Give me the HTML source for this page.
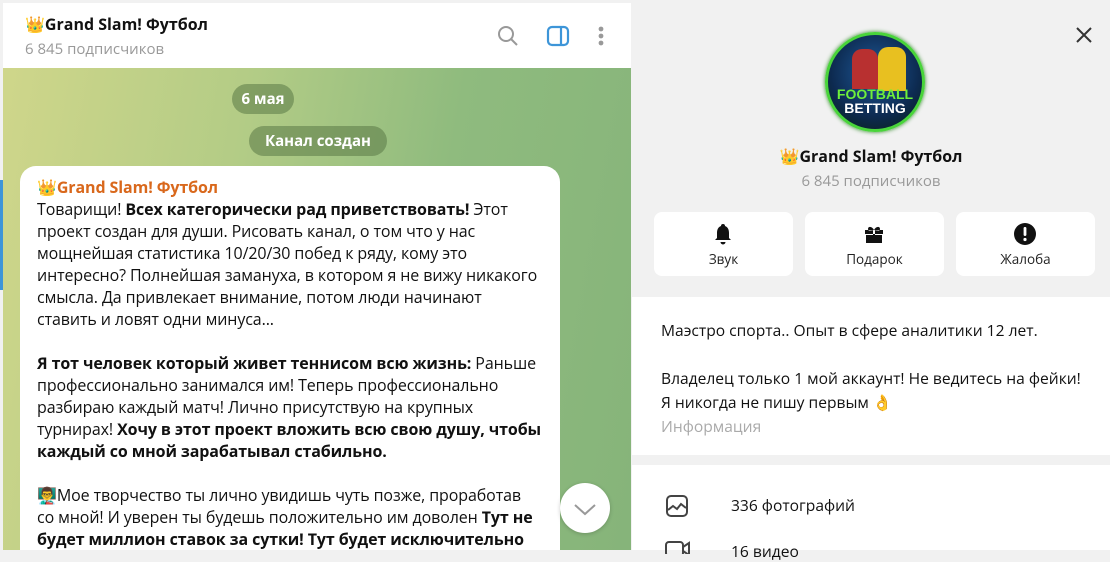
<!DOCTYPE html>
<html><head><meta charset="utf-8"><style>
*{margin:0;padding:0;box-sizing:border-box}
body{width:1110px;height:550px;overflow:hidden;background:#f1f1f1;font-family:"Open Sans","Liberation Sans","DejaVu Sans",sans-serif;position:relative}
.left{position:absolute;left:3px;top:3px;width:628px;height:547px;background:#fff}
.hdr{position:absolute;left:0;top:0;width:628px;height:65px;background:#fff}
.chat{position:absolute;left:0;top:65px;width:628px;height:482px;background:linear-gradient(100deg,#cfd68a 0%,#b3cc86 35%,#8fbb7e 65%,#86b47a 100%);overflow:hidden}
.pill{position:absolute;background:rgba(90,120,70,.55);color:#fff;font-size:15px;font-weight:bold;border-radius:15px;height:30px;line-height:30px;text-align:center;white-space:nowrap}
.bubble{position:absolute;left:17px;top:98px;width:540px;height:420px;background:#fff;border-radius:16px}
.txt{position:absolute;left:37px;top:176px;font-size:16px;line-height:22px;color:#111;white-space:nowrap;letter-spacing:-0.1px}
.name{color:#d9681c}
.right{position:absolute;left:632px;top:0;width:478px;height:550px;background:#f1f1f1}
.btn{position:absolute;top:212px;width:139px;height:64px;background:#fff;border-radius:8px;text-align:center;font-size:13.5px;color:#222}
.btn span{position:absolute;left:0;right:0;top:38px}
.btn svg{position:absolute;left:57px;top:10px}
</style></head><body>
<div style="position:absolute;left:0;top:180px;width:3px;height:110px;background:#3d95d8"></div>
<div class="left">
 <div class="hdr">
  <div style="position:absolute;left:22px;top:10px;font-size:16px;font-weight:bold;color:#111">👑Grand Slam! Футбол</div>
  <div style="position:absolute;left:22px;top:36px;font-size:15px;color:#999">6 845 подписчиков</div>
  <svg style="position:absolute;left:494px;top:22px" width="22" height="22" viewBox="0 0 22 22"><circle cx="9" cy="9" r="7" fill="none" stroke="#999" stroke-width="2"/><path d="M14 14l6 6" stroke="#999" stroke-width="2"/></svg>
  <svg style="position:absolute;left:543px;top:22px" width="24" height="22" viewBox="0 0 24 22"><rect x="2" y="2" width="20" height="18" rx="4" fill="none" stroke="#3d95d8" stroke-width="2.2"/><path d="M15 2v18" stroke="#3d95d8" stroke-width="2.2"/></svg>
  <svg style="position:absolute;left:594px;top:22px" width="8" height="22"><circle cx="4" cy="4" r="2.4" fill="#999"/><circle cx="4" cy="11" r="2.4" fill="#999"/><circle cx="4" cy="18" r="2.4" fill="#999"/></svg>
 </div>
 <div class="chat">
  <div class="pill" style="left:229px;top:16px;width:62px">6 мая</div>
  <div class="pill" style="left:246px;top:58px;width:138px">Канал создан</div>
  <div class="bubble"></div>
  <div style="position:absolute;left:557px;top:415px;width:50px;height:50px;border-radius:50%;background:#fff;box-shadow:0 1px 4px rgba(0,0,0,.2)"><svg width="50" height="50"><path d="M15 22l10 9 10-9" fill="none" stroke="#999" stroke-width="2"/></svg></div>
 </div>
</div>
<div class="txt" style="top:176px"><b class="name">👑Grand Slam! Футбол</b><br>
Товарищи! <b>Всех категорически рад приветствовать!</b> Этот<br>
проект создан для души. Рисовать канал, о том что у нас<br>
мощнейшая статистика 10/20/30 побед к ряду, кому это<br>
интересно? Полнейшая замануха, в котором я не вижу никакого<br>
смысла. Да привлекает внимание, потом люди начинают<br>
ставить и ловят одни минуса...<br><br>
<b>Я тот человек который живет теннисом всю жизнь:</b> Раньше<br>
профессионально занимался им! Теперь профессионально<br>
разбираю каждый матч! Лично присутствую на крупных<br>
турнирах! <b>Хочу в этот проект вложить всю свою душу, чтобы<br>
каждый со мной зарабатывал стабильно.</b><br><br>
👨‍🏫Мое творчество ты лично увидишь чуть позже, проработав<br>
со мной! И уверен ты будешь положительно им доволен <b>Тут не<br>
будет миллион ставок за сутки! Тут будет исключительно</b></div>
<div class="right">
 <svg style="position:absolute;left:443px;top:26px" width="18" height="18"><path d="M2 2l14 14M16 2L2 16" stroke="#333" stroke-width="2"/></svg>
 <div style="position:absolute;left:193px;top:32px;width:100px;height:100px;border-radius:50%;background:radial-gradient(circle at 50% 40%,#1e5a9a 0%,#0d2a50 60%,#0a2010 100%);border:3px solid #49d43a;box-shadow:0 0 4px #2a8a20;overflow:hidden">
  <div style="position:absolute;left:24px;top:14px;width:26px;height:40px;background:#b83030;border-radius:10px 10px 0 0"></div>
  <div style="position:absolute;left:50px;top:12px;width:28px;height:44px;background:#e8c020;border-radius:10px 10px 0 0"></div>
  <div style="position:absolute;left:0;right:0;top:52px;text-align:center;font:bold 14px/15px 'Liberation Sans',sans-serif;color:#6fef3a">FOOTBALL</div>
  <div style="position:absolute;left:0;right:0;top:66px;text-align:center;font:bold 14px/15px 'Liberation Sans',sans-serif;color:#fff">BETTING</div>
 </div>
 <div style="position:absolute;left:0;width:478px;top:145px;text-align:center;font-size:16px;font-weight:bold;color:#111">👑Grand Slam! Футбол</div>
 <div style="position:absolute;left:0;width:478px;top:171px;text-align:center;font-size:15px;color:#999">6 845 подписчиков</div>
 <div class="btn" style="left:22px"><svg width="24" height="24" viewBox="0 0 24 24"><path d="M12 2a2 2 0 0 1 2 2c3 1 4 4 4 7v5l2 2H4l2-2v-5c0-3 1-6 4-7a2 2 0 0 1 2-2zM9.5 20h5a2.5 2.5 0 0 1-5 0z" fill="#111"/></svg><span>Звук</span></div>
 <div class="btn" style="left:173px"><svg width="24" height="24" viewBox="0 0 24 24"><path d="M3 8h18v4H3zM4 13h7v8H4zM13 13h7v8h-7zM11 8V21h2V8zM12 8c-2-4-6-4-6-1s4 1 6 1c2 0 6 2 6-1s-4-3-6 1z" fill="#111"/></svg><span>Подарок</span></div>
 <div class="btn" style="left:324px"><svg width="24" height="24" viewBox="0 0 24 24"><circle cx="12" cy="12" r="11" fill="#111"/><rect x="10.6" y="5" width="2.8" height="9" rx="1.2" fill="#fff"/><circle cx="12" cy="17.5" r="1.6" fill="#fff"/></svg><span>Жалоба</span></div>
 <div style="position:absolute;left:0;top:297px;width:478px;height:158px;background:#fff"></div>
 <div style="position:absolute;left:29px;top:318px;font-size:15.6px;line-height:24px;color:#111;white-space:nowrap">Маэстро спорта.. Опыт в сфере аналитики 12 лет.<br><br>Владелец только 1 мой аккаунт! Не ведитесь на фейки!<br>Я никогда не пишу первым 👌<br><span style="color:#aaa">Информация</span></div>
 <div style="position:absolute;left:0;top:465px;width:478px;height:85px;background:#fff"></div>
 <svg style="position:absolute;left:33px;top:494px" width="24" height="24" viewBox="0 0 24 24"><rect x="2" y="2" width="20" height="20" rx="4" fill="none" stroke="#444" stroke-width="2"/><path d="M3 16l5-4 4 3 4-5 5 4" fill="none" stroke="#444" stroke-width="2"/></svg>
 <div style="position:absolute;left:99px;top:494px;font-size:15.6px;color:#111">336 фотографий</div>
 <svg style="position:absolute;left:33px;top:540px" width="26" height="14"><rect x="1" y="2" width="17" height="14" rx="3" fill="none" stroke="#444" stroke-width="2"/><path d="M18 7l6-4v12l-6-4" fill="none" stroke="#444" stroke-width="2"/></svg>
 <div style="position:absolute;left:99px;top:540px;font-size:15.6px;color:#111">16 видео</div>
</div>
</body></html>
